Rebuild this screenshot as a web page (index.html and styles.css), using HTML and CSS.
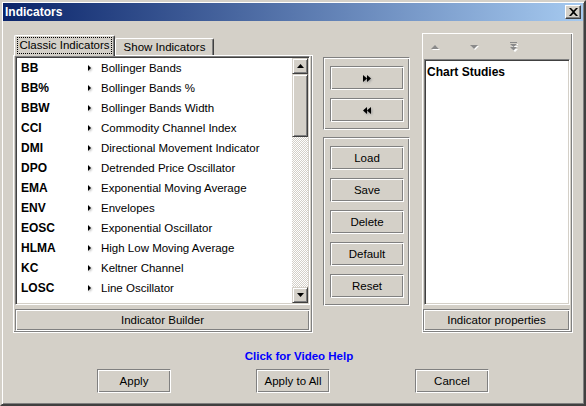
FILE: index.html
```html
<!DOCTYPE html>
<html>
<head>
<meta charset="utf-8">
<title>Indicators</title>
<link rel="stylesheet" href="styles.css">
</head>
<body>
<div class="window">
  <div class="titlebar">
    <span class="title">Indicators</span>
    <span class="close"><svg width="9" height="8" viewBox="0 0 9 8"><path d="M0 0h2l2.5 2.5L7 0h2L5.5 4 9 8H7L4.5 5.5 2 8H0l3.5-4z" fill="#000"/></svg></span>
  </div>

  <div class="main">
    <div class="left">
      <div class="tabstrip">
        <div class="tab tab-active"><span class="focus">Classic Indicators</span></div>
        <div class="tab tab-inactive">Show Indicators</div>
      </div>
      <div class="panel">
        <div class="listbox">
          <div class="rows">
            <div class="row"><span class="code">BB</span><span class="arr"></span><span class="name">Bollinger Bands</span></div>
            <div class="row"><span class="code">BB%</span><span class="arr"></span><span class="name">Bollinger Bands %</span></div>
            <div class="row"><span class="code">BBW</span><span class="arr"></span><span class="name">Bollinger Bands Width</span></div>
            <div class="row"><span class="code">CCI</span><span class="arr"></span><span class="name">Commodity Channel Index</span></div>
            <div class="row"><span class="code">DMI</span><span class="arr"></span><span class="name">Directional Movement Indicator</span></div>
            <div class="row"><span class="code">DPO</span><span class="arr"></span><span class="name">Detrended Price Oscillator</span></div>
            <div class="row"><span class="code">EMA</span><span class="arr"></span><span class="name">Exponential Moving Average</span></div>
            <div class="row"><span class="code">ENV</span><span class="arr"></span><span class="name">Envelopes</span></div>
            <div class="row"><span class="code">EOSC</span><span class="arr"></span><span class="name">Exponential Oscillator</span></div>
            <div class="row"><span class="code">HLMA</span><span class="arr"></span><span class="name">High Low Moving Average</span></div>
            <div class="row"><span class="code">KC</span><span class="arr"></span><span class="name">Keltner Channel</span></div>
            <div class="row"><span class="code">LOSC</span><span class="arr"></span><span class="name">Line Oscillator</span></div>
          </div>
          <div class="scrollbar">
            <div class="sb-btn"><svg width="7" height="4" viewBox="0 0 7 4"><path d="M3.5 0L7 4H0z" fill="#000"/></svg></div>
            <div class="sb-thumb"></div>
            <div class="sb-track"></div>
            <div class="sb-btn"><svg width="7" height="4" viewBox="0 0 7 4"><path d="M0 0h7L3.5 4z" fill="#000"/></svg></div>
          </div>
        </div>
        <div class="btn btn-wide">Indicator Builder</div>
      </div>
    </div>

    <div class="middle">
      <div class="group">
        <div class="btn"><svg class="dbl" width="8" height="7" viewBox="0 0 8 7"><path d="M0 0l4 3.5L0 7zM4 0l4 3.5L4 7z" fill="#000"/></svg></div>
        <div class="btn"><svg class="dbl" width="8" height="7" viewBox="0 0 8 7"><path d="M4 0L0 3.5 4 7zM8 0L4 3.5 8 7z" fill="#000"/></svg></div>
      </div>
      <div class="group group2">
        <div class="btn">Load</div>
        <div class="btn">Save</div>
        <div class="btn">Delete</div>
        <div class="btn">Default</div>
        <div class="btn">Reset</div>
      </div>
    </div>

    <div class="right">
      <div class="arrows">
        <svg class="ar ar-up" width="9" height="6" viewBox="0 0 9 6"><path d="M5 2l4 4H1z" fill="#fff"/><path d="M4 1l4 4H0z" fill="#8a8a8a"/></svg>
        <svg class="ar ar-down" width="9" height="6" viewBox="0 0 9 6"><path d="M1 2h8l-4 4z" fill="#fff"/><path d="M0 1h8L4 5z" fill="#8a8a8a"/></svg>
        <svg class="ar ar-dbl" width="8" height="10" viewBox="0 0 8 10"><path d="M1 1h6v1H1zM1 3h6L4 6zM1 6h6L4 9z" fill="#fff" transform="translate(1 1)"/><path d="M0 0h7v1H0zM0 2h7L3.5 5zM0 5h7L3.5 8.5z" fill="#8a8a8a"/></svg>
      </div>
      <div class="studies">
        <div class="study">Chart Studies</div>
      </div>
      <div class="btn btn-wide">Indicator properties</div>
    </div>
  </div>

  <div class="help">Click for Video Help</div>

  <div class="actions">
    <div class="btn btn-act">Apply</div>
    <div class="btn btn-act">Apply to All</div>
    <div class="btn btn-act">Cancel</div>
  </div>
</div>
</body>
</html>
```

FILE: styles.css
```css
* { box-sizing: border-box; }
html, body { margin: 0; padding: 0; }
body {
  width: 586px;
  height: 406px;
  overflow: hidden;
  background: #d4d0c8;
  font-family: "Liberation Sans", Arial, sans-serif;
  font-size: 11.5px;
  color: #000;
}
.window {
  width: 586px;
  height: 406px;
  border: 2px solid;
  border-color: #d4d0c8 #404040 #404040 #d4d0c8;
  box-shadow: inset 1px 1px #fff, inset -1px -1px #808080;
  padding: 1px;
  display: flex;
  flex-direction: column;
  background: #d4d0c8;
}
.titlebar {
  height: 18px;
  flex: none;
  display: flex;
  align-items: center;
  padding-left: 2px;
  background: linear-gradient(to right, #0a246a, #a6caf0);
}
.title {
  color: #fff;
  font-weight: bold;
  font-size: 12px;
}
.close {
  margin-left: auto;
  margin-right: 2px;
  width: 16px;
  height: 14px;
  background: #d4d0c8;
  border: 1px solid;
  border-color: #fff #404040 #404040 #fff;
  box-shadow: inset -1px -1px #808080;
  display: flex;
  align-items: center;
  justify-content: center;
}

.main {
  display: flex;
  align-items: flex-start;
  padding: 12px 0 0 10px;
  flex: none;
}
.left {
  width: 300px;
  margin-top: 2px;
}
.tabstrip {
  height: 20px;
  display: flex;
  align-items: flex-end;
  padding-left: 1px;
}
.tab {
  background: #d4d0c8;
  border-left: 1px solid #fff;
  border-top: 1px solid #fff;
  border-right: 1px solid #404040;
  box-shadow: inset -1px 0 #808080;
  border-radius: 2px 2px 0 0;
}
.tab-active {
  width: 101px;
  height: 21px;
  margin-bottom: -1px;
  padding: 1px 2px 0 2px;
  position: relative;
  z-index: 1;
}
.focus {
  display: block;
  height: 17px;
  border: 1px dotted #000;
  line-height: 15px;
  text-align: center;
  white-space: nowrap;
}
.tab-inactive {
  width: 99px;
  height: 17px;
  line-height: 17px;
  text-align: center;
  white-space: nowrap;
}
.panel {
  height: 278px;
  border: 1px solid #fff;
  box-shadow: inset -1px -1px #808080;
  padding: 0 2px 1px 1px;
  display: flex;
  flex-direction: column;
}
.listbox {
  height: 249px;
  flex: none;
  display: flex;
  border: 1px solid;
  border-color: #808080 #fff #fff #808080;
  box-shadow: inset 1px 1px #404040, inset -1px -1px #d4d0c8;
  padding: 1px;
}
.rows {
  flex: 1;
  background: #fff;
  overflow: hidden;
  padding-left: 4px;
}
.row {
  height: 20px;
  line-height: 20px;
  display: flex;
  align-items: center;
  white-space: nowrap;
}
.code {
  width: 65px;
  font-weight: bold;
  font-size: 12px;
}
.arr {
  width: 15px;
  height: 7px;
}
.arr::before {
  content: "";
  display: block;
  margin-left: 2px;
  width: 0;
  height: 0;
  border-left: 3px solid #000;
  border-top: 3px solid transparent;
  border-bottom: 3px solid transparent;
  filter: drop-shadow(1px 1px 1px #aaa);
}
.scrollbar {
  width: 16px;
  flex: none;
  display: flex;
  flex-direction: column;
}
.sb-btn, .sb-thumb {
  background: #d4d0c8;
  border: 1px solid;
  border-color: #d4d0c8 #404040 #404040 #d4d0c8;
  box-shadow: inset 1px 1px #fff, inset -1px -1px #808080;
}
.sb-btn {
  height: 16px;
  flex: none;
  display: flex;
  align-items: center;
  justify-content: center;
}
.sb-thumb {
  height: 63px;
  flex: none;
}
.sb-track {
  flex: 1;
  background: repeating-conic-gradient(#fff 0 25%, #d4d0c8 0 50%) 0 0 / 2px 2px;
}

.btn {
  height: 24px;
  border: 1px solid;
  border-color: #808080 #fff #fff #808080;
  box-shadow: inset 1px 1px #fff, inset -1px -1px #808080;
  display: flex;
  align-items: center;
  justify-content: center;
  background: #d4d0c8;
  white-space: nowrap;
}
.btn-wide {
  height: 22px;
  margin-top: 4px;
  flex: none;
}
.dbl { filter: drop-shadow(1px 1px 1px #999); }

.middle {
  width: 87px;
  margin-left: 10px;
  margin-top: 24px;
}
.group {
  border: 1px solid;
  border-color: #808080 #fff #fff #808080;
  box-shadow: inset 1px 1px #fff, inset -1px -1px #808080;
  padding: 8px 5px 7px 6px;
  display: flex;
  flex-direction: column;
  gap: 8px;
}
.group2 {
  margin-top: 7px;
}

.right {
  width: 151px;
  height: 300px;
  margin-left: 12px;
  border: 1px solid #fff;
  box-shadow: inset -1px -1px #808080;
  padding: 0 2px 1px 0;
  display: flex;
  flex-direction: column;
}
.arrows {
  height: 25px;
  flex: none;
  display: flex;
  align-items: center;
  padding-left: 8px;
}
.ar-down { margin-left: 30px; }
.ar-dbl { margin-left: 31px; }
.studies {
  height: 246px;
  flex: none;
  margin-left: 1px;
  background: #fff;
  border: 1px solid;
  border-color: #808080 #fff #fff #808080;
  box-shadow: inset 1px 1px #404040, inset -1px -1px #d4d0c8;
  padding: 5px 2px;
}
.study {
  font-weight: bold;
  line-height: 14px;
  font-size: 12px;
}

.help {
  margin-top: 16px;
  padding-left: 12px;
  text-align: center;
  color: #0000ff;
  font-weight: bold;
  line-height: 14px;
  flex: none;
}
.actions {
  margin-top: 6px;
  display: flex;
  justify-content: center;
  gap: 85px;
}
.btn-act {
  width: 74px;
}
```
